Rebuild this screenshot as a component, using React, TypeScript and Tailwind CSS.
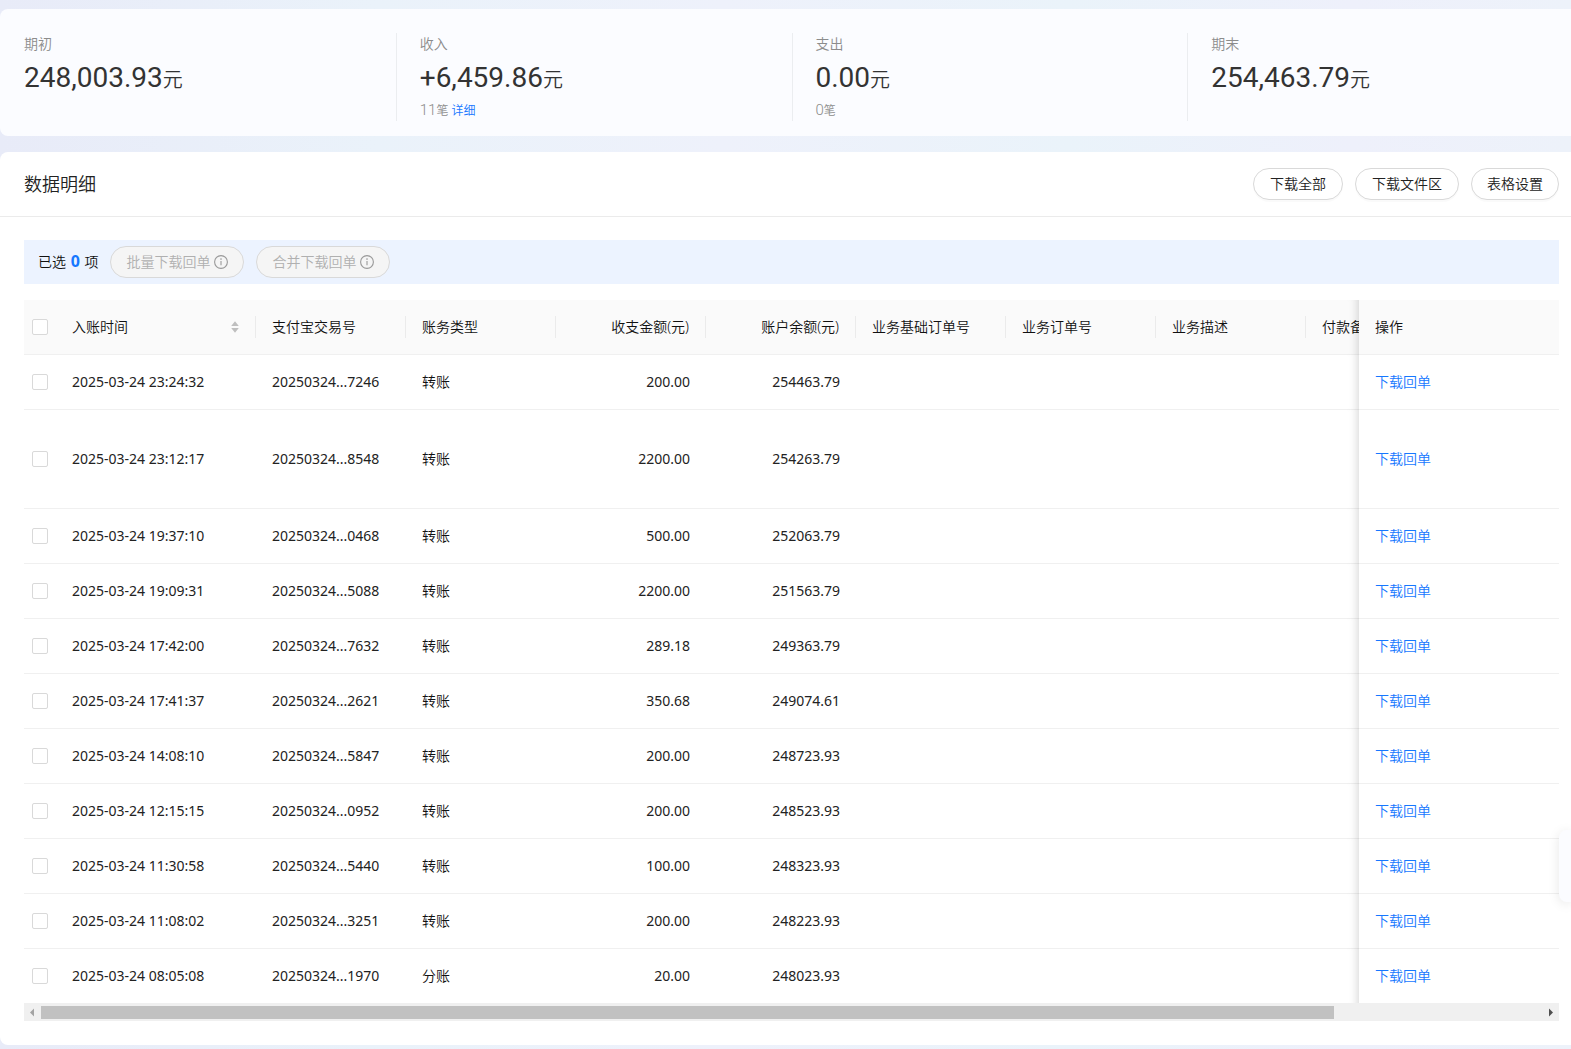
import type React from "react"

type Entry = {
  time: string
  tradeNo: string
  type: string
  amount: string
  balance: string
  tall?: boolean
}

const entries: Entry[] = [
  { time: "2025-03-24 23:24:32", tradeNo: "20250324...7246", type: "转账", amount: "200.00", balance: "254463.79" },
  { time: "2025-03-24 23:12:17", tradeNo: "20250324...8548", type: "转账", amount: "2200.00", balance: "254263.79", tall: true },
  { time: "2025-03-24 19:37:10", tradeNo: "20250324...0468", type: "转账", amount: "500.00", balance: "252063.79" },
  { time: "2025-03-24 19:09:31", tradeNo: "20250324...5088", type: "转账", amount: "2200.00", balance: "251563.79" },
  { time: "2025-03-24 17:42:00", tradeNo: "20250324...7632", type: "转账", amount: "289.18", balance: "249363.79" },
  { time: "2025-03-24 17:41:37", tradeNo: "20250324...2621", type: "转账", amount: "350.68", balance: "249074.61" },
  { time: "2025-03-24 14:08:10", tradeNo: "20250324...5847", type: "转账", amount: "200.00", balance: "248723.93" },
  { time: "2025-03-24 12:15:15", tradeNo: "20250324...0952", type: "转账", amount: "200.00", balance: "248523.93" },
  { time: "2025-03-24 11:30:58", tradeNo: "20250324...5440", type: "转账", amount: "100.00", balance: "248323.93" },
  { time: "2025-03-24 11:08:02", tradeNo: "20250324...3251", type: "转账", amount: "200.00", balance: "248223.93" },
  { time: "2025-03-24 08:05:08", tradeNo: "20250324...1970", type: "分账", amount: "20.00", balance: "248023.93" },
]

function Stat({ label, value, children }: { label: string; value: string; children?: React.ReactNode }) {
  return (
    <div className="h-[88px] border-l border-[#ebedf0] pl-[23px] first:border-transparent">
      <div className="text-sm leading-[22px] text-[#8c8c8c]">{label}</div>
      <div className="flex h-[46px] items-center">
        <div className="text-[#333]">
          <span className="font-[Roboto,sans-serif] text-[28px] leading-none font-normal">{value}</span>
          <span className="text-xl leading-none">元</span>
        </div>
      </div>
      <div className="text-xs leading-5 text-[#8c8c8c]">{children}</div>
    </div>
  )
}

function Count({ value }: { value: number }) {
  return (
    <>
      <span className="font-[Roboto,sans-serif] text-[15px] leading-none">{value}</span>笔
    </>
  )
}

function PillButton({ children, tight }: { children: React.ReactNode; tight?: boolean }) {
  return (
    <button
      className={`h-8 rounded-full border border-[#d9d9d9] bg-white text-sm text-[#222] shadow-[0_2px_0_rgba(0,0,0,0.02)] ${
        tight ? "px-[15px]" : "px-4"
      }`}
    >
      {children}
    </button>
  )
}

function BatchButton({ children }: { children: React.ReactNode }) {
  return (
    <button
      disabled
      className="flex h-8 items-center gap-1 rounded-full border border-[#d9d9d9] bg-[#f5f5f5] px-[15px] text-sm text-[#b0b0b0]"
    >
      {children}
      <svg className="size-[14px] text-[#999]" viewBox="0 0 14 14" fill="none" stroke="currentColor">
        <circle cx="7" cy="7" r="6.4" strokeWidth="1.1" />
        <path d="M7 6v4.2" strokeWidth="1.1" />
        <circle cx="7" cy="4.1" r="0.8" fill="currentColor" stroke="none" />
      </svg>
    </button>
  )
}

function Checkbox({ label }: { label: string }) {
  return (
    <input
      type="checkbox"
      aria-label={label}
      className="mx-auto block size-4 appearance-none rounded-[2px] border border-[#d9d9d9] bg-white checked:bg-[#1677ff]"
    />
  )
}

function HeadCell({ children, right, last }: { children: React.ReactNode; right?: boolean; last?: boolean }) {
  return (
    <th className="border-b border-[#f0f0f0] bg-[#fafafa] p-0 font-[350]">
      <div
        className={`flex h-[22px] items-center overflow-hidden px-4 whitespace-nowrap ${right ? "justify-end" : ""} ${
          last ? "" : "border-r border-[#ebebeb]"
        }`}
      >
        {children}
      </div>
    </th>
  )
}

// shadow on the left edge of the pinned column
const pinned =
  "sticky right-0 border-b border-[#f0f0f0] px-4 text-left font-[350] before:pointer-events-none before:absolute before:top-0 before:right-full before:-bottom-px before:w-[30px] before:shadow-[inset_-10px_0_8px_-8px_rgba(0,0,0,0.15)]"

export default function App() {
  return (
    <div className="relative overflow-hidden bg-[#eef2fb] bg-[linear-gradient(90deg,#e8ebf8_0%,#eaf2fa_24%,#eef1fb_46%,#eaf3fa_68%,#eef0fb_86%,#edf2fa_100%)] pt-[9px] pb-1 font-['Noto_Sans','Noto_Sans_CJK_SC',sans-serif] text-sm font-[350] text-[#111]">
      <main className="-mr-3 flex flex-col gap-4">
        <section className="grid grid-cols-4 rounded-lg bg-[#fbfcff] pt-6 pb-[15px]">
          <Stat label="期初" value="248,003.93" />
          <Stat label="收入" value="+6,459.86">
            <Count value={11} />{" "}
            <a href="#detail" className="text-[#1677ff]">
              详细
            </a>
          </Stat>
          <Stat label="支出" value="0.00">
            <Count value={0} />
          </Stat>
          <Stat label="期末" value="254,463.79" />
        </section>

        <section className="rounded-lg bg-white pb-6">
          <header className="flex h-[65px] items-center justify-between border-b border-[#ebebeb] px-6">
            <h2 className="text-lg font-[350] text-[#222]">数据明细</h2>
            <div className="flex gap-3">
              <PillButton>下载全部</PillButton>
              <PillButton>下载文件区</PillButton>
              <PillButton tight>表格设置</PillButton>
            </div>
          </header>

          <div className="px-6 pt-[23px]">
            <div className="mb-4 flex h-11 items-center gap-3 bg-[#ecf3ff] pl-[14px]">
              <span>
                已选 <b className="mx-px text-base leading-none text-[#1677ff]">0</b> 项
              </span>
              <BatchButton>批量下载回单</BatchButton>
              <BatchButton>合并下载回单</BatchButton>
            </div>

            <div className="overflow-x-hidden">
              <table className="w-[1782px] table-fixed border-separate border-spacing-0">
                <colgroup>
                  <col className="w-8" />
                  <col className="w-[200px]" />
                  <col className="w-[150px]" />
                  <col className="w-[150px]" />
                  <col className="w-[150px]" />
                  <col className="w-[150px]" />
                  <col className="w-[150px]" />
                  <col className="w-[150px]" />
                  <col className="w-[150px]" />
                  <col />
                  <col className="w-[200px]" />
                </colgroup>
                <thead>
                  <tr className="h-[55px]">
                    <th className="border-b border-[#f0f0f0] bg-[#fafafa] p-0">
                      <Checkbox label="全选" />
                    </th>
                    <HeadCell>
                      <span className="flex-1 text-left">入账时间</span>
                      <svg className="h-3 w-2 text-[#bfbfbf]" viewBox="0 0 8 12" fill="currentColor">
                        <path d="M4 0.2 7.8 5H0.2zM4 11.8 7.8 7H0.2z" />
                      </svg>
                    </HeadCell>
                    <HeadCell>支付宝交易号</HeadCell>
                    <HeadCell>账务类型</HeadCell>
                    <HeadCell right>收支金额(元)</HeadCell>
                    <HeadCell right>账户余额(元)</HeadCell>
                    <HeadCell>业务基础订单号</HeadCell>
                    <HeadCell>业务订单号</HeadCell>
                    <HeadCell>业务描述</HeadCell>
                    <HeadCell last>付款备注</HeadCell>
                    <th className={`${pinned} bg-[#fafafa]`}>操作</th>
                  </tr>
                </thead>
                <tbody className="[&_td]:border-b [&_td]:border-[#f0f0f0] [&>tr:last-child>td]:border-b-0">
                  {entries.map((e) => (
                    <tr key={e.tradeNo} className={e.tall ? "h-[99px]" : "h-[55px] last:h-[54px]"}>
                      <td className="p-0">
                        <Checkbox label={e.time} />
                      </td>
                      <td className="px-4 font-normal text-[#222]">{e.time}</td>
                      <td className="px-4 font-normal text-[#222]">{e.tradeNo}</td>
                      <td className="px-4">{e.type}</td>
                      <td className="px-4 text-right font-normal text-[#222]">{e.amount}</td>
                      <td className="px-4 text-right font-normal text-[#222]">{e.balance}</td>
                      <td colSpan={4} />
                      <td className={`${pinned} bg-white`}>
                        <a href="#receipt" className="text-[#1677ff]">
                          下载回单
                        </a>
                      </td>
                    </tr>
                  ))}
                </tbody>
              </table>
            </div>

            <div className="flex h-[18px] items-center bg-[#f0f0f0]">
              <svg className="h-[18px] w-[17px] shrink-0" viewBox="0 0 17 18" fill="#a3a3a3">
                <path d="M6 9.5 10 5.5v8z" />
              </svg>
              <div className="flex-1">
                <div className="h-[13px] w-[86.14%] bg-[#c1c1c1]" />
              </div>
              <svg className="h-[18px] w-[17px] shrink-0" viewBox="0 0 17 18" fill="#505050">
                <path d="M11 9.5 7 5.5v8z" />
              </svg>
            </div>
          </div>
        </section>
      </main>

      <aside className="absolute right-0 bottom-[147px] h-[72px] w-3 rounded-l-lg bg-[#fbfcff] shadow-[0_2px_12px_rgba(0,0,0,0.1)]" />
    </div>
  )
}
